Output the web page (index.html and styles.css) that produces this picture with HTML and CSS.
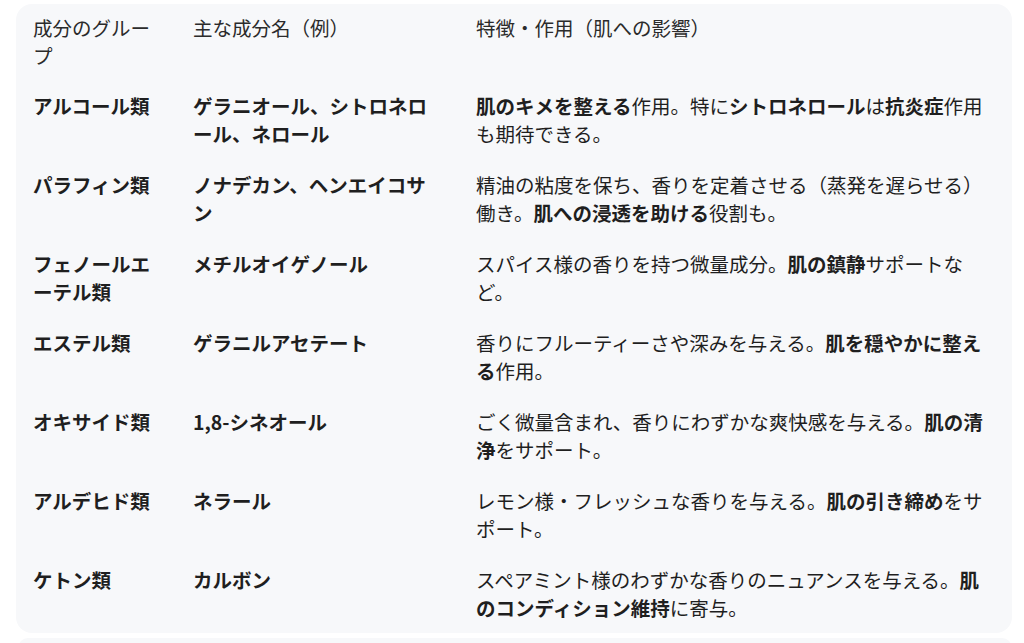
FILE: index.html
```html
<!DOCTYPE html>
<html lang="ja">
<head>
<meta charset="utf-8">
<link rel="stylesheet" href="styles.css">
</head>
<body>
<div class="card">
  <table class="tbl">
    <colgroup>
      <col class="c1"><col class="c2"><col class="c3">
    </colgroup>
    <thead>
      <tr><th>成分のグループ</th><th>主な成分名（例）</th><th>特徴・作用（肌への影響）</th></tr>
    </thead>
    <tbody>
      <tr><td><b>アルコール類</b></td><td><b>ゲラニオール、シトロネロール、ネロール</b></td><td><b>肌のキメを整える</b>作用。特に<b>シトロネロール</b>は<b>抗炎症</b>作用も期待できる。</td></tr>
      <tr><td><b>パラフィン類</b></td><td><b>ノナデカン、ヘンエイコサン</b></td><td>精油の粘度を保ち、香りを定着させる（蒸発を遅らせる）働き。<b>肌への浸透を助ける</b>役割も。</td></tr>
      <tr><td><b>フェノールエーテル類</b></td><td><b>メチルオイゲノール</b></td><td>スパイス様の香りを持つ微量成分。<b>肌の鎮静</b>サポートなど。</td></tr>
      <tr><td><b>エステル類</b></td><td><b>ゲラニルアセテート</b></td><td>香りにフルーティーさや深みを与える。<b>肌を穏やかに整える</b>作用。</td></tr>
      <tr><td><b>オキサイド類</b></td><td><b>1,8-シネオール</b></td><td>ごく微量含まれ、香りにわずかな爽快感を与える。<b>肌の清浄</b>をサポート。</td></tr>
      <tr><td><b>アルデヒド類</b></td><td><b>ネラール</b></td><td>レモン様・フレッシュな香りを与える。<b>肌の引き締め</b>をサポート。</td></tr>
      <tr><td><b>ケトン類</b></td><td><b>カルボン</b></td><td>スペアミント様のわずかな香りのニュアンスを与える。<b>肌のコンディション維持</b>に寄与。</td></tr>
    </tbody>
  </table>
</div>
<div class="next"></div>
</body>
</html>
```

FILE: styles.css
```css
html, body {
  margin: 0;
  padding: 0;
  background: #ffffff;
}
body {
  font-family: "Noto Sans CJK JP", "Noto Sans", sans-serif;
  color: #1f1f1f;
  overflow: hidden;
}
.card {
  margin: 4px 12px 0 16px;
  background: #f7f8fa;
  border-radius: 16px;
  height: 629px;
  overflow: hidden;
}
.tbl {
  width: 100%;
  border-collapse: collapse;
  table-layout: fixed;
  font-size: 19.5px;
  line-height: 28px;
}
.c1 { width: 160px; }
.c2 { width: 283px; }
.tbl th, .tbl td {
  text-align: left;
  vertical-align: top;
  padding: 10px 16px 13px 17px;
  font-weight: 400;
}
.tbl th {
  color: #2b2b2b;
  padding-bottom: 12px;
}
.tbl td b {
  font-weight: 700;
}
.next {
  margin: 5px 12px 0 18px;
  height: 20px;
  background: #f7f8fa;
  border-radius: 12px;
}
```
